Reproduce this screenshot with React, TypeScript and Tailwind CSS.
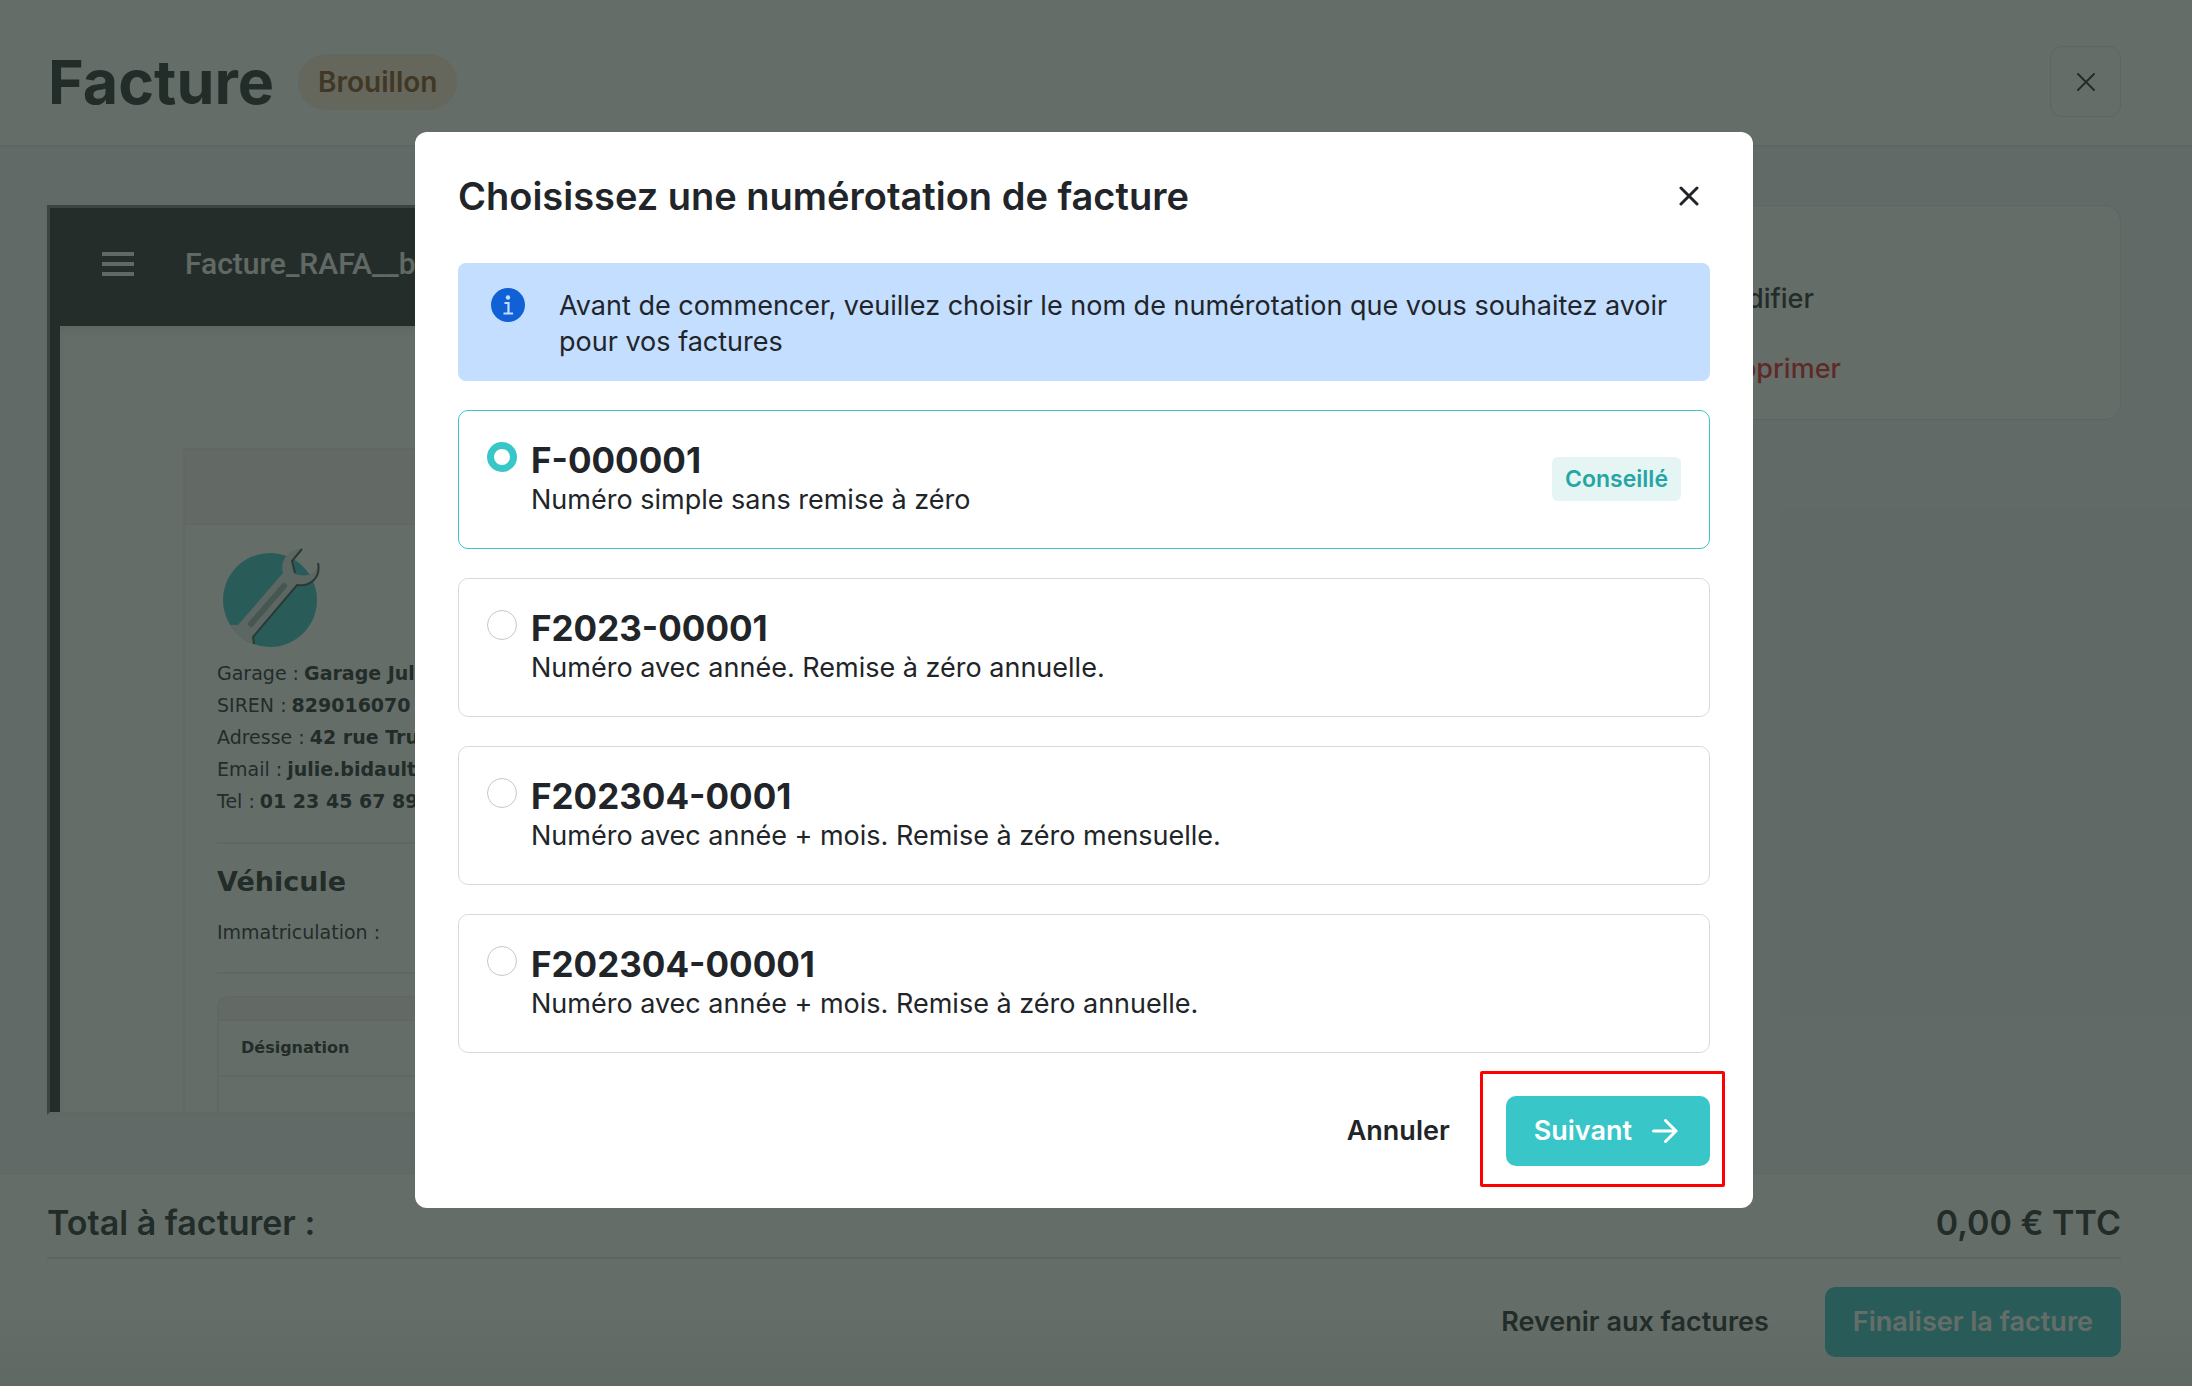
import { useState } from "react";
import type { ReactNode } from "react";

const options = [
  { id: "simple", title: "F-000001", text: "Numéro simple sans remise à zéro", advised: true },
  { id: "year", title: "F2023-00001", text: "Numéro avec année. Remise à zéro annuelle." },
  { id: "month", title: "F202304-0001", text: "Numéro avec année + mois. Remise à zéro mensuelle." },
  { id: "month-year", title: "F202304-00001", text: "Numéro avec année + mois. Remise à zéro annuelle." },
];

const garage = [
  ["Garage", "Garage Julie"],
  ["SIREN", "829016070"],
  ["Adresse", "42 rue Trudaine"],
  ["Email", "julie.bidault@garage.fr"],
  ["Tel", "01 23 45 67 89"],
];

function Cross({ className, width }: { className: string; width: number }) {
  return (
    <svg viewBox="0 0 20 20" className={className} fill="none" stroke="currentColor" strokeWidth={width} strokeLinecap="round" aria-hidden="true">
      <path d="M2 2 18 18M18 2 2 18" />
    </svg>
  );
}

function GarageLogo() {
  return (
    <svg viewBox="0 0 100 100" className="ml-1 block size-[100px]" aria-hidden="true">
      <defs>
        <clipPath id="handle">
          <path d="M0 0H100V60L96 53A47 47 0 0 1 2 53Z" />
        </clipPath>
      </defs>
      <circle cx="49" cy="53" r="47" fill="#38c6c8" />
      <g clipPath="url(#handle)">
        <path d="M81 2C70 1 58 12 62 26L17 78H6L20 102 33 98 32 90 76 38C90 42 100 30 98 16 95 24 92 27 87 28 81 29 78 28 74 27L71 14Z" fill="#dfe7ea" />
        <path d="m30 77 33-38" stroke="#9db3b3" strokeWidth="6" strokeLinecap="round" />
        <path d="M81 2 71 14 74 26M97 16C100 30 90 40 76 38L32 90 33 97" fill="none" stroke="#38504a" strokeWidth="2" />
      </g>
    </svg>
  );
}

function DocumentPreview() {
  return (
    <section className="flex flex-1 flex-col overflow-hidden border-[3px] border-t-[#767676] border-l-[#767676] border-r-[#ededed] border-b-[#ededed] bg-[#2b2a2c]">
      <div className="flex h-[118px] shrink-0 items-center bg-[#2b2a2c] pb-[6px] pl-[52px] font-['Roboto',sans-serif] text-[30px] leading-8 font-medium text-[#f1f1f1]">
        <button type="button" aria-label="Menu" className="flex w-8 flex-col gap-[6px]">
          <span className="h-1 w-full bg-[#f1f1f1]" />
          <span className="h-1 w-full bg-[#f1f1f1]" />
          <span className="h-1 w-full bg-[#f1f1f1]" />
        </button>
        <span className="pl-[51px]">Facture_RAFA__brouillon.pdf</span>
      </div>
      <div className="ml-[10px] flex flex-1 flex-col bg-white pt-[122px] pl-[123px] font-['DejaVu_Sans',sans-serif] text-[#212529] shadow-[inset_0_6px_8px_rgba(0,0,0,0.08)]">
        <div className="flex-1 border-t-2 border-l-2 border-[#f0e9e9]">
          <div className="h-[75px] border-b-2 border-[#f0e9e9] bg-[#f9f6f6]" />
          <div className="pt-[22px] pl-8">
            <GarageLogo />
            <dl className="pt-[10px] text-[19px] leading-8">
              {garage.map(([label, value]) => (
                <div key={label} className="flex gap-[5px]">
                  <dt className="shrink-0">{label} :</dt>
                  <dd className="font-bold whitespace-nowrap">{value}</dd>
                </div>
              ))}
            </dl>
            <hr className="mt-[25px] border-t-2 border-[#f0e9e9]" />
            <h2 className="pt-[22px] text-[27px] leading-8 font-bold">Véhicule</h2>
            <p className="pt-[18px] text-[19px] leading-8">Immatriculation :</p>
            <hr className="mt-6 border-t-2 border-[#f0e9e9]" />
            <div className="mt-[22px] rounded-tl-xl border-2 border-b-0 border-[#f0e9e9]">
              <div className="h-[21px] rounded-tl-xl bg-[#f9f6f6]" />
              <table className="w-full border-collapse text-left">
                <thead>
                  <tr className="border-y-2 border-[#f0e9e9]">
                    <th className="h-[56px] pl-[22px] text-[16px] font-bold">Désignation</th>
                  </tr>
                </thead>
                <tbody>
                  <tr>
                    <td className="h-9" />
                  </tr>
                </tbody>
              </table>
            </div>
          </div>
        </div>
      </div>
    </section>
  );
}

function PlainButton({ children }: { children: ReactNode }) {
  return (
    <button type="button" className="text-[27px] leading-8 font-semibold">
      {children}
    </button>
  );
}

export default function App() {
  const [selected, setSelected] = useState("simple");
  return (
    <div className="relative min-h-screen font-['Inter',sans-serif] text-[#212529]">
      <div className="flex h-screen min-h-[1386px] flex-col overflow-hidden bg-[#f0f3f6]">
        <header className="flex h-[147px] shrink-0 items-start justify-between border-b-2 border-[#e4e7ea] bg-white pt-[46px] pr-[71px] pl-12">
          <div className="flex h-[71px] items-center gap-6">
            <h1 className="text-[61px] leading-[72px] font-bold">Facture</h1>
            <span className="rounded-full bg-[#ffe6d2] px-[20px] py-3 text-[28px] leading-8 font-semibold text-[#834e18]">Brouillon</span>
          </div>
          <button type="button" aria-label="Fermer la facture" className="flex size-[71px] items-center justify-center rounded-xl border border-[#e0e3e6]">
            <Cross className="size-5" width={2} />
          </button>
        </header>

        <main className="flex min-h-0 flex-1 items-stretch gap-8 pt-[58px] pr-[71px] pb-[58px] pl-[47px]">
          <DocumentPreview />
          <aside className="flex w-[500px] flex-col gap-[38px] self-start rounded-2xl border border-[#e0e3e6] bg-white pt-[77px] pb-[34px] pl-[84px] text-[27px] leading-8 font-medium">
            <button type="button" className="text-left">Modifier</button>
            <button type="button" className="text-left text-[#e8201f]">Supprimer</button>
          </aside>
        </main>

        <footer className="shrink-0 border-t border-[#e4e7ea] bg-linear-to-b from-white from-65% to-[#efefef] pr-[71px] pb-[29px] pl-[47px]">
          <div className="flex h-[85px] items-center justify-between border-b-2 border-[#e0e3e6] pt-[14px] text-[34px] leading-10 font-semibold">
            <span>Total à facturer :</span>
            <span>0,00 € TTC</span>
          </div>
          <div className="flex items-center justify-end gap-14 pt-7">
            <PlainButton>Revenir aux factures</PlainButton>
            <button type="button" className="h-[70px] rounded-[10px] bg-[#38c6c8] px-7 text-[27px] leading-8 font-semibold text-white">
              Finaliser la facture
            </button>
          </div>
        </footer>
      </div>

      <div className="absolute inset-0 flex items-start justify-center bg-[rgba(36,47,42,0.7)] pt-[132px] pr-6">
        <div role="dialog" aria-modal="true" aria-labelledby="dialog-title" className="w-[1338px] max-w-full rounded-xl bg-white px-[43px] pb-[42px]">
          <div className="flex h-[131px] items-center justify-between pr-[7px] pb-1">
            <h2 id="dialog-title" className="text-[38px] leading-[48px] font-semibold">
              Choisissez une numérotation de facture
            </h2>
            <button type="button" aria-label="Fermer" className="p-1">
              <Cross className="size-[20px]" width={3} />
            </button>
          </div>

          <div className="flex gap-[34px] rounded-lg bg-[#c3deff] pt-[25px] pr-6 pb-[21px] pl-[33px] text-[27px] leading-9">
            <svg viewBox="0 0 34 34" className="size-[34px] shrink-0" aria-hidden="true">
              <circle cx="17" cy="17" r="17" fill="#1060d6" />
              <circle cx="17" cy="9.5" r="2.2" fill="#c3deff" />
              <path d="M13.5 15H17.5V25M12.5 25.5H22" fill="none" stroke="#c3deff" strokeWidth="2.2" />
            </svg>
            <p>Avant de commencer, veuillez choisir le nom de numérotation que vous souhaitez avoir pour vos factures</p>
          </div>

          <fieldset className="flex flex-col gap-[29px] pt-[29px]">
            <legend className="sr-only">Numérotation</legend>
            {options.map((option) => (
              <label
                key={option.id}
                className="flex h-[139px] cursor-pointer items-start rounded-[10px] border border-[#d9dade] px-[28px] pt-[27px] has-checked:border-[#38c6c8]"
              >
                <input
                  type="radio"
                  name="numbering"
                  checked={selected === option.id}
                  onChange={() => setSelected(option.id)}
                  className="mt-1 size-[30px] shrink-0 appearance-none rounded-full border border-[#c5c6cd] bg-white checked:border-[7px] checked:border-[#38c6c8]"
                />
                <span className="flex flex-1 flex-col pl-[14px]">
                  <span className="text-[35px] leading-[44px] font-bold">{option.title}</span>
                  <span className="text-[27px] leading-9">{option.text}</span>
                </span>
                {option.advised && (
                  <span className="mt-[19px] rounded-md bg-[#e5f5f4] px-[13px] py-[6px] text-[23px] leading-8 font-semibold text-[#26a5a5]">Conseillé</span>
                )}
              </label>
            ))}
          </fieldset>

          <div className="flex items-center justify-end pt-[43px]">
            <PlainButton>Annuler</PlainButton>
            <div className="relative ml-14">
              <button type="button" className="flex h-[70px] items-center gap-5 rounded-[10px] bg-[#38c6c8] pr-8 pl-7 text-[27px] leading-8 font-semibold text-white">
                Suivant
                <svg viewBox="0 0 26 26" className="size-[26px]" fill="none" stroke="currentColor" strokeWidth="3" strokeLinecap="round" strokeLinejoin="round" aria-hidden="true">
                  <path d="M1.5 13H24M13.5 2.5 24 13 13.5 23.5" />
                </svg>
              </button>
              <span className="pointer-events-none absolute -top-[25px] -right-[15px] -bottom-[21px] -left-[26px] rounded-xs border-[3px] border-[#ff0000]" />
            </div>
          </div>
        </div>
      </div>
    </div>
  );
}
